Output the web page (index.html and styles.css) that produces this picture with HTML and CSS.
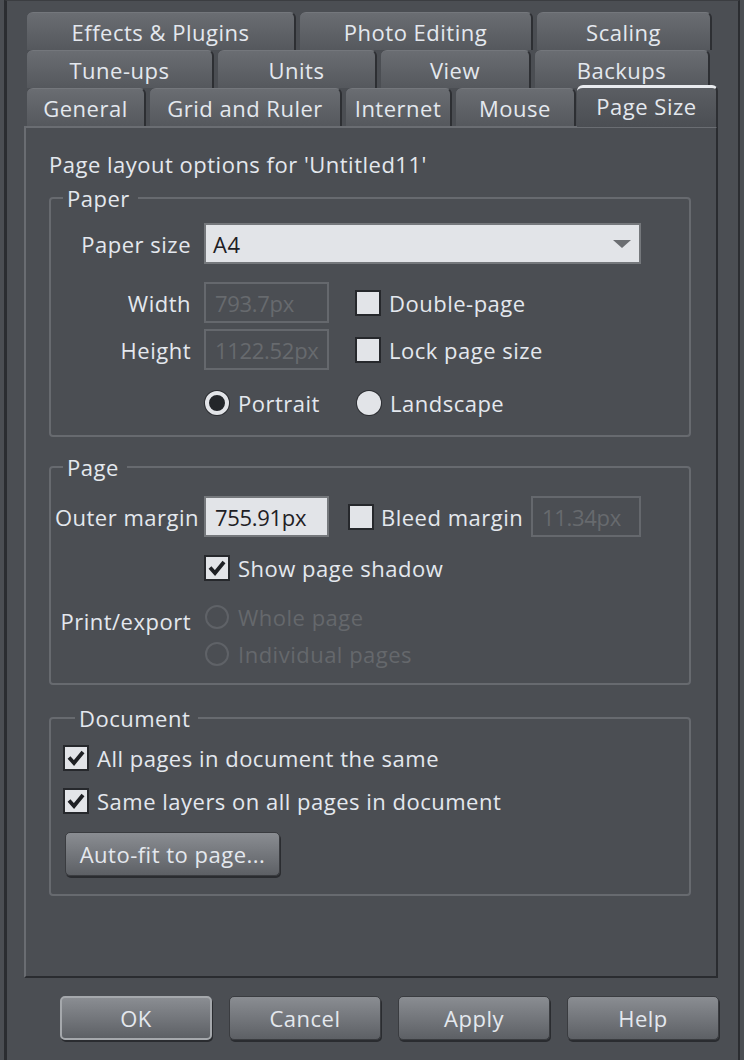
FILE: index.html
```html
<!DOCTYPE html>
<html lang="en">
<head>
    <meta charset="UTF-8" />
    <title>Options - Page Size</title>
    <link rel="stylesheet" href="styles.css">
</head>
<body>
    <div class="window">
        <div class="tabs">
            <div class="tab-row">
                <div class="tab t-effects">Effects &amp; Plugins</div>
                <div class="tab t-photo">Photo Editing</div>
                <div class="tab t-scaling">Scaling</div>
            </div>
            <div class="tab-row">
                <div class="tab t-tuneups">Tune-ups</div>
                <div class="tab t-units">Units</div>
                <div class="tab t-view">View</div>
                <div class="tab t-backups">Backups</div>
            </div>
            <div class="tab-row">
                <div class="tab t-general">General</div>
                <div class="tab t-grid">Grid and Ruler</div>
                <div class="tab t-internet">Internet</div>
                <div class="tab t-mouse">Mouse</div>
                <div class="tab t-pagesize active">Page Size</div>
            </div>
        </div>

        <div class="panel">
            <p class="intro">Page layout options for 'Untitled11'</p>

            <fieldset class="group paper">
                <legend>Paper</legend>
                <div class="row r-size">
                    <span class="lbl">Paper size</span>
                    <div class="select">A4<span class="arrow"></span></div>
                </div>
                <div class="row r-width">
                    <span class="lbl">Width</span>
                    <div class="input disabled">793.7px</div>
                    <span class="check"></span>
                    <span class="check-label">Double-page</span>
                </div>
                <div class="row r-height">
                    <span class="lbl">Height</span>
                    <div class="input disabled">1122.52px</div>
                    <span class="check"></span>
                    <span class="check-label">Lock page size</span>
                </div>
                <div class="row r-orient">
                    <div class="radio-item">
                        <span class="radio selected"></span>
                        <span>Portrait</span>
                    </div>
                    <div class="radio-item">
                        <span class="radio"></span>
                        <span>Landscape</span>
                    </div>
                </div>
            </fieldset>

            <fieldset class="group page">
                <legend>Page</legend>
                <div class="row r-margin">
                    <span class="lbl lbl-wide">Outer margin</span>
                    <div class="input">755.91px</div>
                    <span class="check bleed"></span>
                    <span class="check-label bleed-label">Bleed margin</span>
                    <div class="input disabled small">11.34px</div>
                </div>
                <div class="row r-shadow">
                    <span class="check checked">
                        <svg width="22" height="22" viewBox="0 0 22 22"><path d="M4 10.5 L9 16 L18 5" fill="none" stroke="#1e2024" stroke-width="3.8"/></svg>
                    </span>
                    <span class="check-label">Show page shadow</span>
                </div>
                <div class="row r-export">
                    <span class="lbl lbl-export">Print/export</span>
                    <div class="radio-list">
                        <div class="radio-item dim">
                            <span class="radio off"></span>
                            <span>Whole page</span>
                        </div>
                        <div class="radio-item dim">
                            <span class="radio off"></span>
                            <span>Individual pages</span>
                        </div>
                    </div>
                </div>
            </fieldset>

            <fieldset class="group document">
                <legend>Document</legend>
                <div class="row r-doc1">
                    <span class="check checked">
                        <svg width="22" height="22" viewBox="0 0 22 22"><path d="M4 10.5 L9 16 L18 5" fill="none" stroke="#1e2024" stroke-width="3.8"/></svg>
                    </span>
                    <span class="check-label">All pages in document the same</span>
                </div>
                <div class="row r-doc2">
                    <span class="check checked">
                        <svg width="22" height="22" viewBox="0 0 22 22"><path d="M4 10.5 L9 16 L18 5" fill="none" stroke="#1e2024" stroke-width="3.8"/></svg>
                    </span>
                    <span class="check-label">Same layers on all pages in document</span>
                </div>
                <button class="btn autofit">Auto-fit to page...</button>
            </fieldset>
        </div>

        <div class="buttons">
            <button class="btn default">OK</button>
            <button class="btn">Cancel</button>
            <button class="btn">Apply</button>
            <button class="btn">Help</button>
        </div>
    </div>
</body>
</html>
```

FILE: styles.css
```css
body {
    margin: 0;
    background-color: #4b4e53;
    font-family: "Open Sans", "Noto Sans", sans-serif;
    font-size: 22px;
    line-height: 24px;
    letter-spacing: 0.5px;
    color: #e4e8ee;
}

.window {
    width: 736px;
    height: 1060px;
    box-sizing: border-box;
    margin-left: 4px;
    border-left: 3px solid #2b2d31;
    border-right: 2px solid #2b2d31;
    border-top: 1px solid #3b3d41;
    padding-top: 11px;
}

/* tabs */
.tab-row {
    display: flex;
    gap: 4px;
    height: 38px;
    margin-left: 20px;
}

.tab {
    box-sizing: border-box;
    display: flex;
    align-items: center;
    justify-content: center;
    padding-top: 1px;
    border-radius: 6px 6px 0 0;
    border-top: 1px solid #74777c;
    border-right: 2px solid #2d2f33;
    background: linear-gradient(#6a6d72, #55585d);
    white-space: nowrap;
}

.t-effects { width: 269px; }
.t-photo { width: 233px; }
.t-scaling { width: 175px; }
.t-tuneups { width: 187px; }
.t-units { width: 159px; }
.t-view { width: 150px; }
.t-backups { width: 175px; }
.t-general { width: 119px; }
.t-grid { width: 192px; }
.t-internet { width: 106px; }
.t-mouse { width: 120px; }

.tab.active {
    width: 141px;
    height: 42px;
    margin-left: -3px;
    margin-top: -3px;
    align-items: flex-start;
    padding-top: 6px;
    position: relative;
    z-index: 1;
    border-top: 3px solid #e9ebef;
    background: linear-gradient(#5b5e63, #4b4e53);
}

/* panel */
.panel {
    margin-left: 17px;
    width: 694px;
    height: 852px;
    box-sizing: border-box;
    border: 2px solid;
    border-color: #6a6d72 #2a2c30 #2a2c30 #6a6d72;
    padding: 24px 25px 0 23px;
}

.intro {
    margin: 0;
}

.group {
    margin: 10px 0 0;
    padding: 0;
    border: 2px solid #676a6f;
    border-radius: 4px;
    min-width: 0;
}

.group legend {
    margin-left: 12px;
    padding: 0 8px 0 4px;
}

.row {
    display: flex;
    align-items: center;
    white-space: nowrap;
}

.lbl {
    width: 140px;
    margin-right: 13px;
    text-align: right;
}

.select {
    box-sizing: border-box;
    display: flex;
    align-items: center;
    width: 437px;
    height: 41px;
    padding: 0 8px 0 7px;
    background: #e2e4e8;
    border: 2px solid #75787c;
    color: #1e2024;
}

.arrow {
    margin-left: auto;
    width: 0;
    height: 0;
    border-left: 9px solid transparent;
    border-right: 9px solid transparent;
    border-top: 8px solid #6b6e72;
}

.input {
    box-sizing: border-box;
    display: flex;
    align-items: center;
    width: 125px;
    height: 41px;
    padding-left: 9px;
    background: #e2e4e8;
    border: 2px solid #75787c;
    color: #1e2024;
    overflow: hidden;
    letter-spacing: -0.3px;
}

.input.disabled {
    background: transparent;
    border-color: #65686d;
    color: #676a6e;
}

.input.small {
    width: 110px;
}

.check {
    box-sizing: border-box;
    display: flex;
    align-items: center;
    justify-content: center;
    width: 26px;
    height: 26px;
    margin-left: 26px;
    background: #e2e4e8;
    border: 2px solid #26282c;
}

.check-label {
    margin-left: 8px;
}

.radio-item {
    display: flex;
    align-items: center;
    gap: 9px;
    height: 26px;
}

.radio {
    box-sizing: border-box;
    width: 24px;
    height: 24px;
    border-radius: 50%;
    background: #e2e4e8;
    box-shadow: 0 0 0 1px #2c2e32;
}

.radio.selected {
    background: #23262a;
    border: 4px solid #e2e4e8;
}

.radio.off {
    background: transparent;
    border: 2px solid #5f6267;
    box-shadow: none;
}

.dim {
    color: #65686c;
}

/* paper group */
.r-size { margin-top: 13px; }
.r-width { margin-top: 18px; }
.r-height { margin-top: 6px; }
.r-orient { margin-top: 20px; margin-left: 153px; margin-bottom: 19px; }
.r-orient .radio-item { width: 151px; padding-left: 1px; }

/* page group */
.group.page { margin-top: 18px; }
.r-margin { margin-top: 17px; }
.lbl-wide { width: 148px; margin-right: 5px; }
.check.bleed { margin-left: 19px; }
.bleed-label { width: 150px; margin-left: 7px; }
.r-shadow { margin-top: 18px; padding-left: 153px; }
.r-shadow .check { margin-left: 0; }
.r-export { margin-top: 23px; align-items: flex-start; margin-bottom: 16px; }
.lbl-export { padding-top: 5px; }
.radio-list { display: flex; flex-direction: column; gap: 11px; padding-left: 1px; }

/* document group */
.group.document { margin-top: 21px; padding: 0 0 18px 12px; }
.document .check { margin-left: 0; }
.r-doc1 { margin-top: 15px; }
.r-doc2 { margin-top: 17px; }

/* buttons */
.btn {
    box-sizing: border-box;
    height: 44px;
    font-family: inherit;
    font-size: 22px;
    letter-spacing: 0.5px;
    color: #e4e8ee;
    border: 1px solid #3a3c40;
    border-radius: 5px;
    background: linear-gradient(#8a8d92, #5d6065);
    box-shadow: 1px 2px 0 #2a2c30;
}

.btn.autofit {
    width: 215px;
    margin: 18px 0 0 2px;
}

.btn.default {
    border: 2px solid #a5a8ac;
}

.buttons {
    display: flex;
    justify-content: flex-end;
    gap: 17px;
    margin-top: 18px;
    padding-right: 19px;
}

.buttons .btn {
    width: 152px;
}
```
